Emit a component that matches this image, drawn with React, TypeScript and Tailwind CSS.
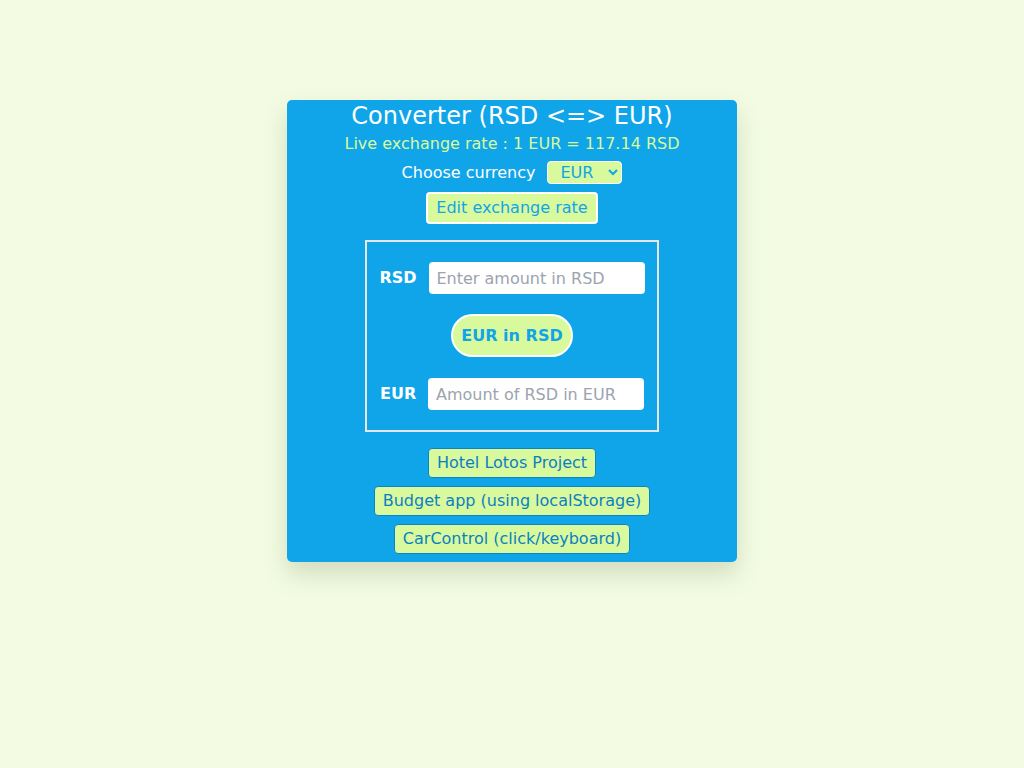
import { useState } from 'react'

const RATE = 117.14

export default function App() {
  const [currency, setCurrency] = useState('EUR')
  const [rsd, setRsd] = useState('')
  const [eur, setEur] = useState('')

  const convert = () => {
    const n = parseFloat(rsd)
    if (!isNaN(n)) setEur((currency === 'EUR' ? n / RATE : n * RATE).toFixed(2))
  }

  return (
    <div className="min-h-screen bg-[#f3fce3] pt-[100px] font-['DejaVu_Sans',sans-serif]">
      <div className="mx-auto flex w-[450px] flex-col items-center rounded-[5px] bg-[#10a5e9] pb-2 shadow-[0_12px_24px_rgba(90,110,60,0.22)]">
        <h1 className="text-[24px] leading-[32px] text-white">Converter (RSD &lt;=&gt; EUR)</h1>
        <p className="text-[16px] leading-[24px] text-[#d9f99d]">Live exchange rate : 1 EUR = {RATE} RSD</p>

        <div className="mt-[5px] flex items-center gap-3">
          <span className="text-[16px] leading-[20px] text-white">Choose currency</span>
          <select
            value={currency}
            onChange={(e) => setCurrency(e.target.value)}
            className="h-[23px] w-[75px] rounded-[4px] border border-white bg-[#d9f99d] pl-[8px] text-[16px] text-[#10a5e9] outline-none"
          >
            <option>EUR</option>
            <option>RSD</option>
          </select>
        </div>

        <button className="mt-2 h-[32px] rounded-[4px] border-2 border-white bg-[#d9f99d] px-2 text-[16px] text-[#10a5e9]">
          Edit exchange rate
        </button>

        <div className="mt-4 flex w-[294px] flex-col items-center border-2 border-[#e5e7eb] py-5">
          <div className="flex items-center gap-3">
            <label className="w-[37px] text-[16px] font-bold text-white">RSD</label>
            <input
              value={rsd}
              onChange={(e) => setRsd(e.target.value)}
              placeholder="Enter amount in RSD"
              className="h-[32px] w-[216px] rounded-[4px] bg-white px-2 text-[16px] text-gray-700 outline-none placeholder:text-[#9ca3af]"
            />
          </div>

          <button
            onClick={convert}
            className="mt-5 mb-[21px] h-[43px] w-[122px] rounded-full border-2 border-white bg-[#d9f99d] text-[16px] font-bold text-[#10a5e9]"
          >
            {currency} in RSD
          </button>

          <div className="flex items-center gap-3">
            <label className="w-[36px] text-[16px] font-bold text-white">EUR</label>
            <input
              value={eur}
              readOnly
              placeholder="Amount of RSD in EUR"
              className="h-[32px] w-[216px] rounded-[4px] bg-white px-2 text-[16px] text-gray-700 outline-none placeholder:text-[#9ca3af]"
            />
          </div>
        </div>

        <div className="mt-4 flex flex-col items-center gap-2">
          {['Hotel Lotos Project', 'Budget app (using localStorage)', 'CarControl (click/keyboard)'].map((l) => (
            <a
              key={l}
              href="#"
              className="flex h-[30px] items-center rounded-[4px] border border-[#0b84c6] bg-[#d9f99d] px-2 text-[16px] text-[#0b7fc4]"
            >
              {l}
            </a>
          ))}
        </div>
      </div>
    </div>
  )
}
